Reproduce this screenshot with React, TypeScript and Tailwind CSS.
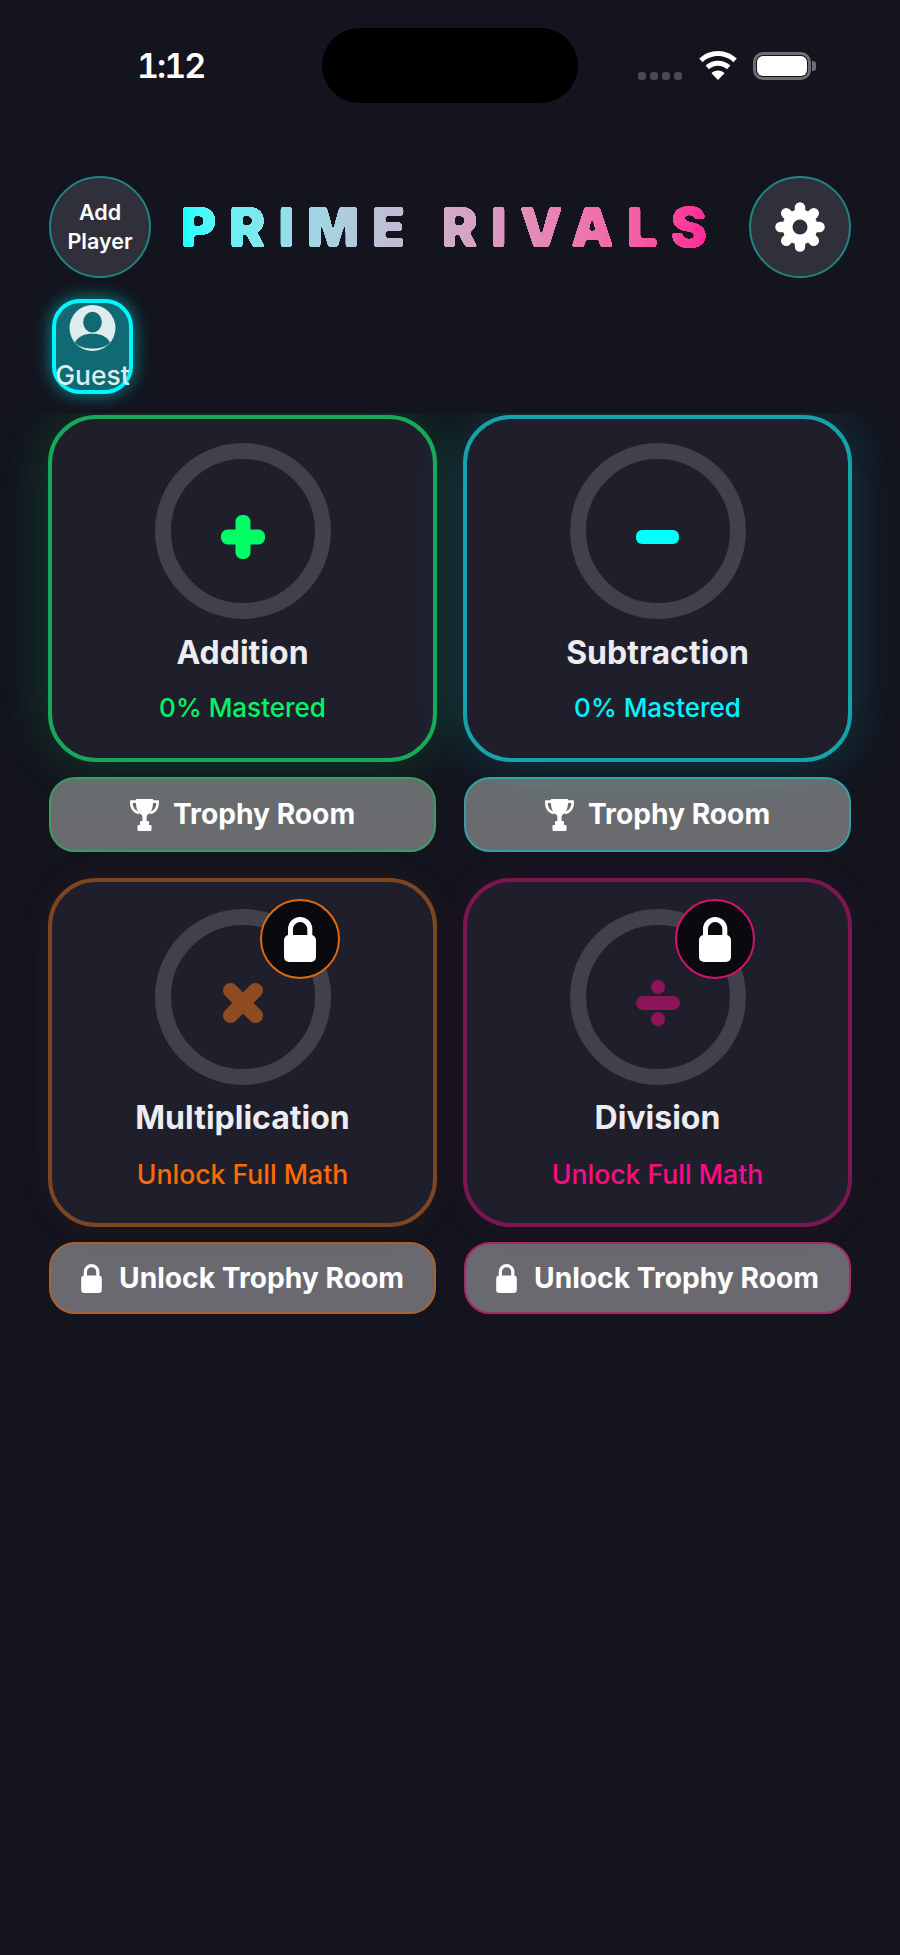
import React from "react";

function Wifi() {
  return (
    <svg width="40" height="29" viewBox="0 0 40 30" fill="#fff">
      <path d="M20 0C12.5 0 5.7 3 0.6 7.8L4 11.6C8.2 7.6 13.8 5.2 20 5.2s11.8 2.4 16 6.4l3.4-3.8C34.3 3 27.5 0 20 0z" />
      <path d="M20 10c-4.9 0-9.4 1.9-12.8 5.1l3.5 3.9c2.4-2.3 5.7-3.7 9.3-3.7s6.9 1.4 9.3 3.7l3.5-3.9C29.4 11.9 24.9 10 20 10z" />
      <path d="M20 20.2c-2.6 0-5 1-6.8 2.7L20 30l6.8-7.1c-1.8-1.7-4.2-2.7-6.8-2.7z" />
    </svg>
  );
}

function Gear() {
  const angles = [0, 45, 90, 135, 180, 225, 270, 315];
  return (
    <svg width="50" height="50" viewBox="-25 -25 50 50">
      <circle r="17.5" fill="#fff" />
      {angles.map((a) => (
        <line key={a} x1="0" y1="-16" x2="0" y2="-19.5" stroke="#fff" strokeWidth="10.5" strokeLinecap="round" transform={`rotate(${a})`} />
      ))}
      <circle r="7.5" fill="#2f303a" />
    </svg>
  );
}

function Trophy() {
  return (
    <svg width="29" height="32" viewBox="0 0 29 32" fill="#fff">
      <path d="M6 0h17c0.3 6.5-0.4 12.6-5 15.6-1 0.7-1.4 1.4-1.4 2.4V23H12.4v-5c0-1-0.4-1.7-1.4-2.4C6.4 12.6 5.7 6.5 6 0z" />
      <path d="M6.5 2.6H1.4C1 8.6 4 12.8 9 14" fill="none" stroke="#fff" strokeWidth="2.6" />
      <path d="M22.5 2.6h5.1c0.4 6-2.6 10.2-7.6 11.4" fill="none" stroke="#fff" strokeWidth="2.6" />
      <rect x="10" y="22" width="9" height="5" rx="1" />
      <rect x="7.5" y="26" width="14" height="6" rx="1.2" />
    </svg>
  );
}

function Lock({ width, height }: { width: number; height: number }) {
  return (
    <svg width={width} height={height} viewBox="0 0 32 45" fill="#fff">
      <rect x="0" y="18" width="32" height="27" rx="5" />
      <path d="M6.5 20V12.2A9.65 9.65 0 0 1 25.8 12.2V20" fill="none" stroke="#fff" strokeWidth="5" />
    </svg>
  );
}

function Person() {
  return (
    <svg width="47" height="47" viewBox="0 0 47 47">
      <circle cx="23.5" cy="23.5" r="23.5" fill="#dfeced" />
      <ellipse cx="23.5" cy="17.5" rx="9.5" ry="10.5" fill="#0f6a74" />
      <path d="M5.5 38.5C9 32 15.5 29.5 23.5 29.5S38 32 41.5 38.5C37 43 30.5 44.5 23.5 44.5S10 43 5.5 38.5z" fill="#0f6a74" />
    </svg>
  );
}

function PlusIcon() {
  return (
    <svg width="44" height="44" viewBox="0 0 44 44" fill="currentColor">
      <rect x="0" y="14.5" width="44" height="15" rx="6.5" />
      <rect x="14.5" y="0" width="15" height="44" rx="6.5" />
    </svg>
  );
}

function MinusIcon() {
  return (
    <svg width="43" height="44" viewBox="0 0 43 44" fill="currentColor">
      <rect x="0" y="15" width="43" height="14" rx="6" />
    </svg>
  );
}

function TimesIcon() {
  return (
    <svg width="40" height="44" viewBox="0 0 40 44" stroke="currentColor" strokeWidth="15" strokeLinecap="round">
      <line x1="7.5" y1="9.5" x2="32.5" y2="34.5" />
      <line x1="32.5" y1="9.5" x2="7.5" y2="34.5" />
    </svg>
  );
}

function DivideIcon() {
  return (
    <svg width="44" height="46" viewBox="0 0 44 46" fill="currentColor">
      <rect x="0" y="16" width="44" height="14" rx="7" />
      <circle cx="22" cy="7" r="7" />
      <circle cx="22" cy="39" r="7" />
    </svg>
  );
}

function StatusBar() {
  return (
    <div className="flex h-[176px] items-start pt-[28px]">
      <div className="ml-[137px] w-[185px] pt-[18px] text-[34px] font-semibold tabular-nums leading-[40px] tracking-[-2px] text-white">1:12</div>
      <div className="h-[75px] w-[256px] rounded-full bg-black" />
      <div className="ml-[60px] flex items-start">
        <div className="mt-[44px] flex gap-[4px]">
          <div className="h-[8px] w-[8px] rounded-[3px] bg-[#4a4a53]" />
          <div className="h-[8px] w-[8px] rounded-[3px] bg-[#4a4a53]" />
          <div className="h-[8px] w-[8px] rounded-[3px] bg-[#4a4a53]" />
          <div className="h-[8px] w-[8px] rounded-[3px] bg-[#4a4a53]" />
        </div>
        <div className="ml-[16px] mt-[23px]"><Wifi /></div>
        <div className="ml-[15px] mt-[24px] flex items-center">
          <div className="flex h-[28px] w-[58px] items-center justify-center rounded-[10px] border-[3px] border-[#6e6e74]">
            <div className="h-[20px] w-[50px] rounded-[6px] bg-white" />
          </div>
          <div className="ml-[1px] h-[10px] w-[4px] rounded-r-[3px] bg-[#6e6e74]" />
        </div>
      </div>
    </div>
  );
}

function Header() {
  return (
    <div className="flex h-[102px] items-center px-[49px]">
      <div className="flex h-[102px] w-[102px] shrink-0 flex-col items-center justify-center rounded-full border-2 border-[#1e8583] bg-[#2f303a] text-center text-[21.5px] font-semibold leading-[29px] text-white">
        <span>Add</span>
        <span>Player</span>
      </div>
      <div className="flex flex-1 justify-center">
        <svg width="0" height="0" className="absolute">
          <filter id="roundCorners" colorInterpolationFilters="sRGB">
            <feGaussianBlur stdDeviation="1.8" />
            <feColorMatrix type="matrix" values="1 0 0 0 0  0 1 0 0 0  0 0 1 0 0  0 0 0 24 -9.5" />
          </filter>
        </svg>
        <div className="w-fit whitespace-nowrap bg-gradient-to-r from-[#00ffff] to-[#ff1493] bg-clip-text text-[55px] font-black leading-[60px] tracking-[12.5px] text-transparent [filter:url(#roundCorners)]">
          PRIME RIVALS
        </div>
      </div>
      <div className="flex h-[102px] w-[102px] shrink-0 items-center justify-center rounded-full border-2 border-[#1e8583] bg-[#2f303a]">
        <Gear />
      </div>
    </div>
  );
}

function Guest() {
  return (
    <div className="mt-[21px] h-[114px] pl-[52px]">
      <div className="flex h-[95px] w-[81px] flex-col items-center rounded-[28px] border-[4px] border-[#00f6ff] bg-[#0f6a74] pt-[2px] shadow-[0_0_18px_rgba(0,255,255,0.55)]">
        <Person />
        <span className="mt-[9px] whitespace-nowrap text-[26.5px] font-medium leading-[30px] text-[#dbeeef]">Guest</span>
      </div>
    </div>
  );
}

type CardProps = {
  name: string;
  sub: string;
  icon: React.ReactNode;
  locked?: boolean;
  cardBorder: string;
  glow: string;
  text: string;
  btnBorder: string;
  iconColor: string;
  badgeBorder?: string;
};

function Card(p: CardProps) {
  return (
    <div className="flex flex-col">
      <div className={`relative flex flex-col items-center rounded-[48px] border-[4px] bg-[#1f1f2c] ${p.cardBorder} ${p.glow} ${p.locked ? "h-[349px] pt-[27px]" : "h-[347px] pt-[24px]"}`}>
        <div className="flex h-[176px] w-[176px] items-center justify-center rounded-full border-[16px] border-[#41414d]">
          <div className={`mt-[12px] flex ${p.iconColor}`}>{p.icon}</div>
        </div>
        <div className={`text-[32px] font-[650] leading-[40px] text-[#ececf1] ${p.locked ? "mt-[13px]" : "mt-[14px]"}`}>{p.name}</div>
        <div className={`font-[550] leading-[32px] ${p.text} ${p.locked ? "mt-[20px] text-[26.6px]" : "mt-[19px] text-[26px]"}`}>{p.sub}</div>
        {p.locked && (
          <div className={`absolute left-[208px] top-[17px] flex h-[80px] w-[80px] items-center justify-center rounded-full border-[2px] bg-[#0a0a0e] ${p.badgeBorder}`}>
            <Lock width={32} height={45} />
          </div>
        )}
      </div>
      <div className={`mx-[1px] mt-[15px] flex items-center justify-center rounded-[26px] border-2 text-[28.2px] font-[650] text-white ${p.btnBorder} ${p.locked ? "h-[72px] gap-[17px] bg-[#69696f]" : "h-[75px] gap-[14px] bg-[#696b6f]"}`}>
        {p.locked ? <Lock width={21} height={29} /> : <Trophy />}
        <span>{p.locked ? "Unlock Trophy Room" : "Trophy Room"}</span>
      </div>
    </div>
  );
}

export default function App() {
  return (
    <div className="flex h-[1955px] w-[900px] flex-col overflow-hidden bg-[#13141e] font-['Inter',sans-serif]">
      <StatusBar />
      <Header />
      <Guest />
      <div className="flex-1 overflow-hidden">
        <div className="grid grid-cols-2 gap-x-[26px] gap-y-[26px] px-[48px] pt-[2px]">
          <Card name="Addition" sub="0% Mastered" icon={<PlusIcon />} iconColor="text-[#00ff66]" cardBorder="border-[#17a95a]" glow="shadow-[0_0_50px_rgba(0,255,102,0.18)]" text="text-[#00f566]" btnBorder="border-[#3c9c63]" />
          <Card name="Subtraction" sub="0% Mastered" icon={<MinusIcon />} iconColor="text-[#00ffff]" cardBorder="border-[#16a2aa]" glow="shadow-[0_0_50px_rgba(0,255,255,0.18)]" text="text-[#00f5ff]" btnBorder="border-[#36a0a6]" />
          <Card locked name="Multiplication" sub="Unlock Full Math" icon={<TimesIcon />} iconColor="text-[#8f4c20]" cardBorder="border-[#7c4622]" glow="shadow-[0_0_40px_rgba(255,106,0,0.06)]" text="text-[#ff6a00]" btnBorder="border-[#a8622f]" badgeBorder="border-[#e0690f]" />
          <Card locked name="Division" sub="Unlock Full Math" icon={<DivideIcon />} iconColor="text-[#8c1458]" cardBorder="border-[#7a1650]" glow="shadow-[0_0_40px_rgba(255,10,133,0.06)]" text="text-[#ff0a85]" btnBorder="border-[#a8286a]" badgeBorder="border-[#d81070]" />
        </div>
      </div>
    </div>
  );
}
